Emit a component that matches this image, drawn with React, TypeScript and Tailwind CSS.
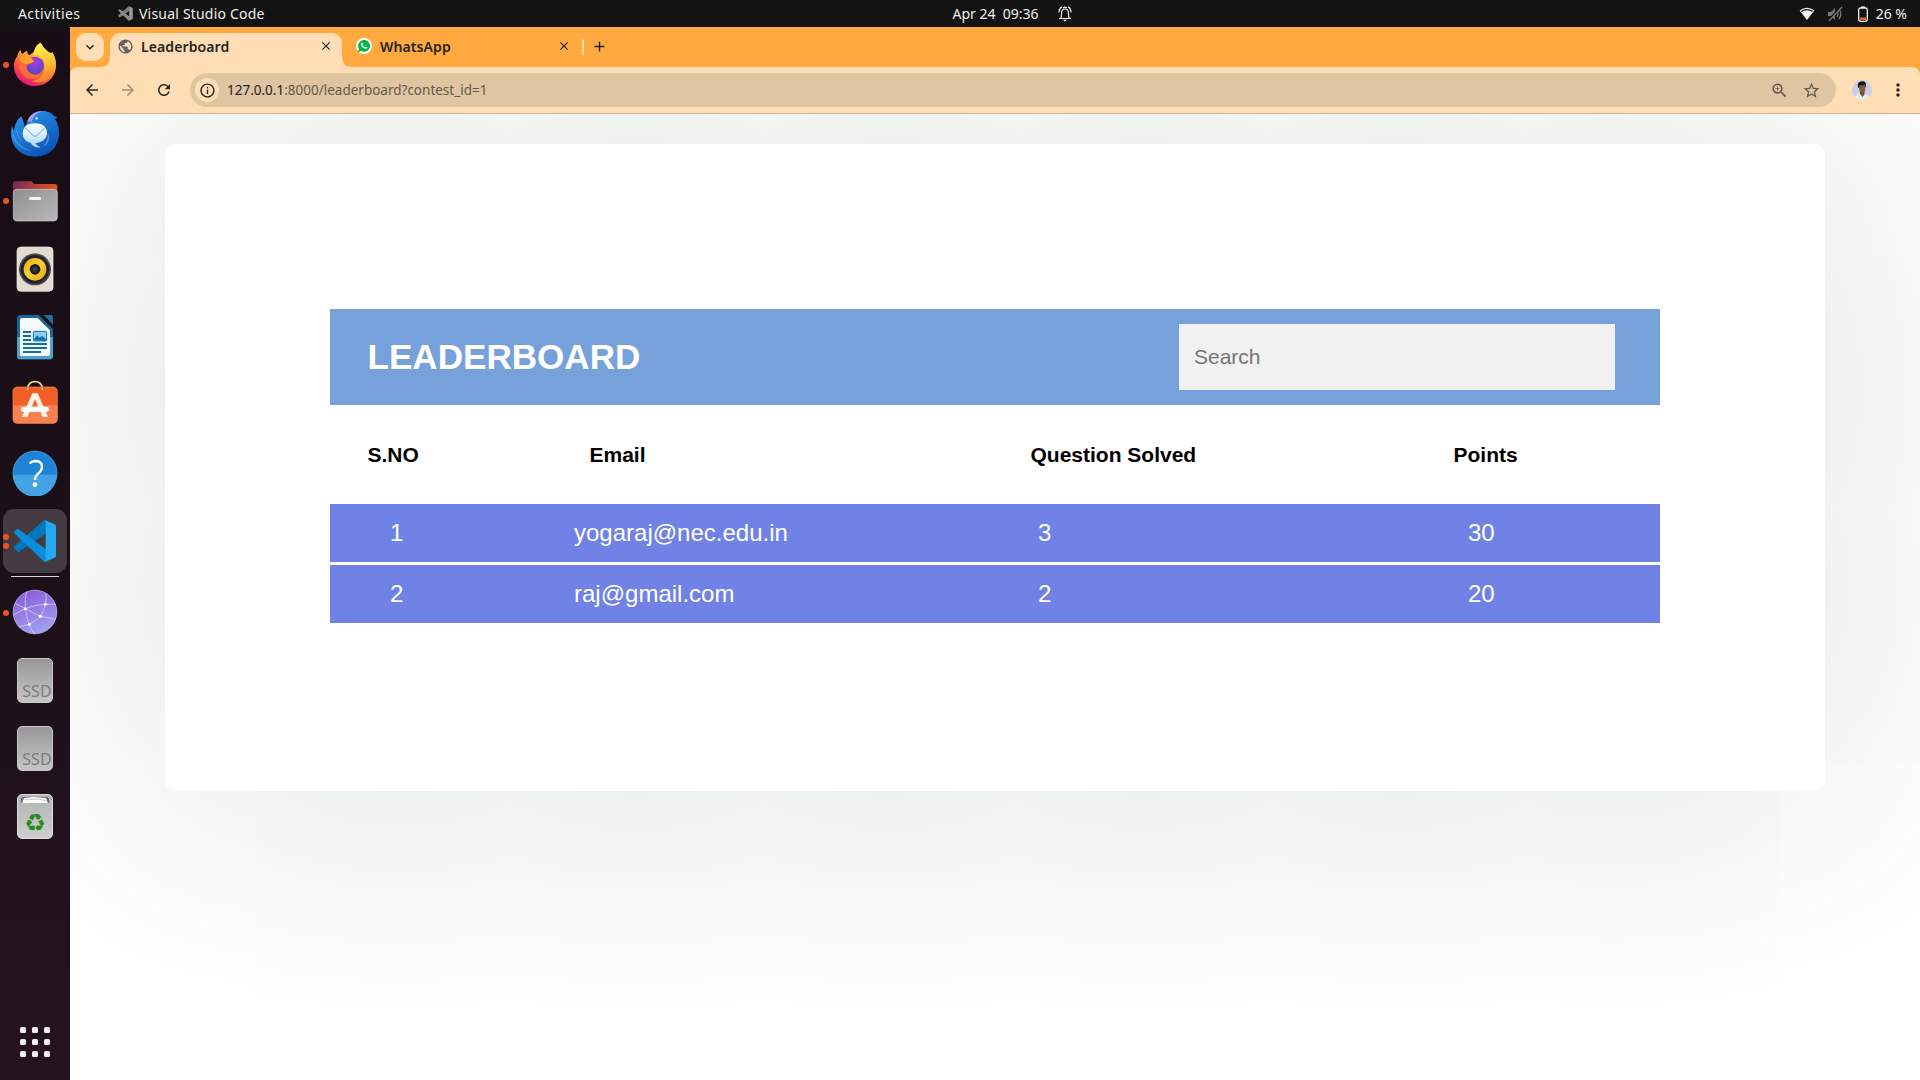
import React from "react";
import {
  MdArrowBack,
  MdArrowForward,
  MdRefresh,
  MdInfoOutline,
  MdOutlineZoomIn,
  MdStarBorder,
  MdMoreVert,
  MdClose,
  MdAdd,
  MdPublic,
  MdKeyboardArrowDown,
} from "react-icons/md";
import { IoLogoWhatsapp } from "react-icons/io";

const UI = "font-['Noto_Sans',sans-serif]";

function CodeMark({ mono }: { mono?: boolean }) {
  const a = mono ? "#7c7c7c" : "#0078bd";
  const b = mono ? "#8a8a8a" : "#0a8ddb";
  const c = mono ? "#9a9a9a" : "#24a9f2";
  return (
    <g>
      <path d="M43 746 Q40 743 43 739 L130 662 Q133 659 138 661 V700 L56 757 Q52 757 50 753 Z" fill={a} />
      <path d="M43 700 Q40 696 44 693 L51 688 Q54 686 58 689 L138 748 V785 Q133 787 130 783 Z" fill={b} />
      <path d="M134 660 L164 673 Q168 675 168 679 V767 Q168 771 164 773 L134 786 Q137 784 137 778 V668 Q137 662 134 660Z" fill={c} />
    </g>
  );
}

function Firefox() {
  return (
    <svg viewBox="33 60 144 144" className="size-12">
      <defs>
        <linearGradient id="ffBody" x1="0.8" y1="0.05" x2="0.3" y2="1">
          <stop offset="0" stopColor="#fff44f" />
          <stop offset="0.35" stopColor="#ffb02e" />
          <stop offset="0.65" stopColor="#ff5a36" />
          <stop offset="1" stopColor="#e3127a" />
        </linearGradient>
        <radialGradient id="ffCore" cx="0.5" cy="0.3" r="0.7">
          <stop offset="0" stopColor="#a33be0" />
          <stop offset="1" stopColor="#5347c9" />
        </radialGradient>
        <linearGradient id="ffFlame" x1="0.5" y1="0" x2="0.7" y2="1">
          <stop offset="0" stopColor="#fff24e" />
          <stop offset="0.5" stopColor="#ffc335" />
          <stop offset="1" stopColor="#ff7a2a" />
        </linearGradient>
      </defs>
      <path
        d="M62 89 C62 96 64 99 66 101 L70 100 C76 94 80 93 81 94 C82 99 84 104 88 106 C98 98 105 96 106 84 C108 77 116 69 122 68 C126 74 128 80 136 88 C144 96 148 98 154 100 L156 96 C162 106 168 116 168 136 C168 172 140 198 105 198 C70 198 42 172 42 137 C42 122 48 114 52 109 C52 103 56 95 62 89Z"
        fill="url(#ffBody)"
      />
      <path
        d="M122 68 C126 74 128 80 136 88 C144 96 148 98 154 100 L156 96 C170 116 172 146 152 170 C136 188 112 190 96 184 C124 178 140 156 134 128 C130 112 118 104 102 104 C98 92 110 76 122 68Z"
        fill="url(#ffFlame)"
      />
      <circle cx="105" cy="137" r="27" fill="url(#ffCore)" />
      <path
        d="M60 122 C70 116 86 116 104 124 C98 130 88 132 84 133 C78 138 78 144 84 154 C92 166 112 168 126 158 C118 176 92 184 74 170 C60 158 54 138 60 122Z"
        fill="#ff6a35"
      />
      <path d="M60 122 C62 112 66 102 70 100 C78 93 81 93 81 94 C82 102 84 106 88 108 L102 122 C96 130 84 130 76 132 C70 130 64 126 60 122Z" fill="#ffa02e" />
    </svg>
  );
}

function Thunderbird() {
  return (
    <svg viewBox="33 264 144 144" className="size-12 overflow-visible">
      <defs>
        <linearGradient id="tbBody" x1="0" y1="0" x2="0.6" y2="1">
          <stop offset="0" stopColor="#2a9bf0" />
          <stop offset="1" stopColor="#0a55b8" />
        </linearGradient>
        <linearGradient id="tbEnv" x1="0" y1="0" x2="0" y2="1">
          <stop offset="0" stopColor="#ffffff" />
          <stop offset="1" stopColor="#a9d8fb" />
        </linearGradient>
      </defs>
      <path
        d="M82 304 C88 286 104 273 126 273 C146 273 156 280 162 288 L172 292 C168 296 166 296 164 298 C172 304 177 320 177 340 C177 380 148 410 106 410 C64 410 33 382 33 340 C33 330 34 324 36 318 C38 326 40 330 42 332 C44 312 54 296 64 289 C68 300 74 310 74 322 C78 314 80 310 82 304Z"
        fill="url(#tbBody)"
      />
      <path d="M36 318 C38 350 58 384 96 392 C70 392 46 376 36 350Z" fill="#3ba6f5" opacity="0.6" />
      <path d="M82 304 C90 282 106 274 128 273 C108 280 98 290 96 306Z" fill="#a79af0" />
      <path d="M50 324 C52 344 58 356 70 366 C56 358 48 344 50 324Z" fill="#8f7fe6" />
      <path d="M128 380 C142 370 146 350 142 336 C152 352 146 374 128 380Z" fill="#6f8bea" />
      <circle cx="110" cy="295" r="3.5" fill="#e8f4ff" />
      <path d="M68 338 C70 318 86 309 106 310 C128 310 142 322 141 340 C140 358 126 368 106 370 C110 376 116 380 122 382 C108 384 96 378 92 368 C76 364 68 354 68 338Z" fill="url(#tbEnv)" />
      <path d="M74 322 L100 347 Q105 351 110 347 L136 322" fill="none" stroke="#6fa8dd" strokeWidth="3" />
    </svg>
  );
}

function Files() {
  return (
    <svg viewBox="33 468 144 144" className="size-12">
      <defs>
        <linearGradient id="fiBack" x1="0" y1="0" x2="1" y2="0">
          <stop offset="0" stopColor="#7d2a55" />
          <stop offset="1" stopColor="#e2541f" />
        </linearGradient>
        <linearGradient id="fiFront" x1="0" y1="0" x2="1" y2="1">
          <stop offset="0" stopColor="#8f8f8f" />
          <stop offset="1" stopColor="#b9b9b9" />
        </linearGradient>
      </defs>
      <path d="M39 530 V492 Q39 484 47 484 H92 Q96 484 99 488 L102 492 H164 Q172 492 172 500 V530Z" fill="url(#fiBack)" />
      <rect x="40" y="508" width="132" height="95" rx="11" fill="url(#fiFront)" stroke="#cfcfcf" strokeWidth="2" />
      <rect x="87" y="531" width="36" height="9" rx="4" fill="#f4f4f4" />
    </svg>
  );
}

function Rhythmbox() {
  return (
    <svg viewBox="33 672 144 144" className="size-12">
      <defs>
        <linearGradient id="rbCone" x1="0" y1="0" x2="1" y2="1">
          <stop offset="0" stopColor="#e8a80d" />
          <stop offset="0.5" stopColor="#f8cf37" />
          <stop offset="1" stopColor="#e3a40c" />
        </linearGradient>
      </defs>
      <rect x="51" y="681" width="108" height="133" rx="12" fill="#e2ddd0" stroke="#f6f3ea" strokeWidth="2" />
      <circle cx="105" cy="748" r="48" fill="#4d4c55" />
      <circle cx="105" cy="748" r="43" fill="#24222d" />
      <circle cx="105" cy="748" r="34" fill="url(#rbCone)" />
      <circle cx="105" cy="748" r="16" fill="#1d1d1f" />
      <circle cx="105" cy="748" r="8" fill="#3b3b3c" />
    </svg>
  );
}

function Writer() {
  return (
    <svg viewBox="33 36 144 144" className="size-12">
      <path d="M62 45 H116 L159 88 V167 Q159 178 148 178 H62 Q51 178 51 167 V56 Q51 45 62 45Z" fill="#12699c" />
      <path d="M51 111 H159 V167 Q159 178 148 178 H62 Q51 178 51 167Z" fill="#4da3cd" />
      <path d="M131 45 H154 Q159 45 159 50 V74 Z" fill="#1d6f9f" />
      <path d="M66 54 H113 L150 91 V162 Q150 168 144 168 H66 Q60 168 60 162 V60 Q60 54 66 54Z" fill="#f7fafb" />
      <path d="M69 96h24M69 108h24M69 120h24M69 132h72M69 144h72M69 156h54" stroke="#0b71ad" strokeWidth="5.5" />
      <rect x="100" y="94" width="40" height="29" rx="3" fill="#8ecbec" stroke="#0b71ad" strokeWidth="3" />
      <path d="M101 121 L111 106 L118 113 L126 108 L139 118 V122Z" fill="#0b71ad" />
    </svg>
  );
}

function Software() {
  return (
    <svg viewBox="33 240 144 144" className="size-12">
      <path d="M83 270 V264 Q86 245 105 245 Q124 245 127 264 V270" fill="none" stroke="#efcf8d" strokeWidth="5" />
      <rect x="39" y="261" width="133" height="109" rx="13" fill="#f05f26" stroke="#f9925f" strokeWidth="2" />
      <path d="M39 316 H172 V357 Q172 370 159 370 H52 Q39 370 39 357Z" fill="#f58250" />
      <path d="M83 270 V264 M127 264 V270" stroke="#efcf8d" strokeWidth="5" />
      <path d="M97 280 H113 L144 351 H128 L105 298 L82 351 H66Z" fill="#fff0e6" />
      <rect x="63" y="320" width="84" height="16" rx="8" fill="#fff" />
    </svg>
  );
}

function Help() {
  return (
    <svg viewBox="33 444 144 144" className="size-12">
      <circle cx="105" cy="519" r="66" fill="#1f83d8" stroke="#57b0ee" strokeWidth="2" />
      <path d="M39 524 H171 A66 66 0 0 1 39 524Z" fill="#44a3e4" />
      <path d="M89 490 Q96 483 107 483 Q126 484 126 501 Q126 511 115 520 Q105 528 105 540" fill="none" stroke="#fff" strokeWidth="7" />
      <circle cx="105" cy="554" r="7" fill="#fff" />
    </svg>
  );
}

function Network() {
  return (
    <svg viewBox="33 84 144 144" className="size-12">
      <defs>
        <linearGradient id="nwBg" x1="0.3" y1="0" x2="0.7" y2="1">
          <stop offset="0" stopColor="#8c5ddb" />
          <stop offset="1" stopColor="#9fa4f0" />
        </linearGradient>
        <clipPath id="nwClip">
          <circle cx="105" cy="156" r="66" />
        </clipPath>
      </defs>
      <circle cx="105" cy="156" r="66" fill="url(#nwBg)" />
      <g clipPath="url(#nwClip)" fill="none" stroke="#d9c9f6" strokeWidth="2.5">
        <path d="M80 92 Q74 118 76 146 Q79 172 88 193 Q92 208 104 222" />
        <path d="M38 126 L76 146 L121 169 L172 178" />
        <path d="M76 146 Q104 134 136 133 Q154 131 172 134" />
        <path d="M136 92 Q142 114 136 133 Q132 152 121 169 Q106 184 88 193 Q68 200 50 200" />
        <path d="M76 146 L38 166" />
      </g>
      <g fill="#fff">
        <circle cx="76" cy="146" r="4.5" />
        <circle cx="136" cy="133" r="4.5" />
        <circle cx="121" cy="169" r="4.5" />
        <circle cx="88" cy="193" r="4.5" />
      </g>
      <circle cx="105" cy="156" r="65.5" fill="none" stroke="#c3a9f2" strokeWidth="2" />
    </svg>
  );
}

function Ssd() {
  return (
    <div className="flex h-[45px] w-9 items-end justify-end rounded-[5px] border border-[#c9c9c9] bg-linear-to-b from-[#989898] to-[#c6c6c6]">
      <span className={`${UI} text-[16px] leading-[22px] tracking-[0.2px] text-[#7c7c7c]`}>SSD</span>
    </div>
  );
}

function Trash() {
  return (
    <div className="relative flex h-[45px] w-9 flex-col items-center rounded-[5px] border border-[#dedede] bg-linear-to-b from-[#b4b4b4] to-[#cdcdcd]">
      <svg viewBox="0 0 30 7" className="mt-px h-[7px] w-[30px]">
        <path d="M1 7 Q0 2 3 1 L27 1 Q30 2 29 7Z" fill="#6a6a6a" />
        <path d="M2 7 L4 2 L13 1 L26 2 L28 7Z" fill="#fff" />
        <path d="M5 4 L18 3 L27 5" stroke="#b5b5b5" strokeWidth="0.8" fill="none" />
      </svg>
      <span className="mt-[9px] font-['DejaVu_Sans',sans-serif] text-[24px] leading-[22px] text-[#278a1d]">♻</span>
    </div>
  );
}

function Slot({ dots = 0, active = false, children }: { dots?: number; active?: boolean; children: React.ReactNode }) {
  return (
    <div className="relative flex h-[68px] w-full shrink-0 items-center justify-center">
      {active && <div className="absolute top-[3px] left-[3px] size-16 rounded-[11px] bg-[#433a42]" />}
      <div className="absolute top-0 left-[3px] flex h-[70px] flex-col justify-center gap-[3px]">
        {Array.from({ length: dots }, (_, i) => (
          <span key={i} className="size-[6px] rounded-full bg-[#e95420]" />
        ))}
      </div>
      <div className="relative flex">{children}</div>
    </div>
  );
}

function Dock() {
  return (
    <aside className="flex w-[70px] shrink-0 flex-col items-center bg-linear-to-b from-[#180d14] via-[#1c1018] to-[#25131e] pt-[3px]">
      <Slot dots={1}><Firefox /></Slot>
      <Slot><Thunderbird /></Slot>
      <Slot dots={1}><Files /></Slot>
      <Slot><Rhythmbox /></Slot>
      <Slot><Writer /></Slot>
      <Slot><Software /></Slot>
      <Slot><Help /></Slot>
      <Slot dots={2} active>
        <svg viewBox="33 648 144 144" className="size-12"><CodeMark /></svg>
      </Slot>
      <div className="flex h-1 items-center"><div className="h-px w-12 bg-[#d5d2d4]" /></div>
      <Slot dots={1}><Network /></Slot>
      <Slot><Ssd /></Slot>
      <Slot><Ssd /></Slot>
      <Slot><Trash /></Slot>
      <div className="mt-auto mb-[23px] grid grid-cols-3 gap-[6px]">
        {Array.from({ length: 9 }, (_, i) => (
          <span key={i} className="size-[6px] rounded-[1.5px] bg-[#f2efef]" />
        ))}
      </div>
    </aside>
  );
}

function TopBar() {
  return (
    <header className={`${UI} grid h-[27px] shrink-0 grid-cols-[1fr_auto_1fr] items-center bg-[#131313] text-[14px] text-[#eeeeee]`}>
      <div className="flex items-center pl-[18px]">
        <span className="w-[100px] tracking-[0.4px]">Activities</span>
        <svg viewBox="40 658 130 130" className="mr-[6px] size-[15px]"><CodeMark mono /></svg>
        <span className="tracking-[0.2px]">Visual Studio Code</span>
      </div>
      <div className="flex items-center pl-[104px]">
        <span className="w-[105px] whitespace-pre">Apr 24  09:36</span>
        <svg viewBox="0 0 14 16" className="h-4 w-[14px]" fill="none" stroke="#eee" strokeWidth="1.2">
          <path d="M1 12.5 H13 M2.8 12 Q3.6 10 3.6 7 Q3.6 3 7 3 Q10.4 3 10.4 7 Q10.4 10 11.2 12" />
          <path d="M1 6.5 Q1 2.5 4 0.9 M13 6.5 Q13 2.5 10 0.9" />
          <path d="M5.3 2 Q7 0.4 8.7 2" />
          <path d="M5.3 13.8 H8.7 Q8.2 15.5 7 15.5 Q5.8 15.5 5.3 13.8Z" fill="#eee" stroke="none" />
        </svg>
      </div>
      <div className="flex items-center justify-end pr-[13px]">
        <svg viewBox="0 0 16 14" className="mr-3 h-[14px] w-4">
          <path d="M8 13 L0.6 3.6 Q8 -2.2 15.4 3.6Z" fill="#f2f2f2" />
          <path d="M2.4 4.6 Q8 0.6 13.6 4.6" stroke="#131313" strokeWidth="1.2" fill="none" />
        </svg>
        <svg viewBox="0 0 16 16" className="mr-[15px] size-[16px]" fill="none" stroke="#777" strokeWidth="1.3">
          <path d="M1 6 H4 L8 2 V14 L4 10 H1Z" fill="#777" stroke="none" />
          <path d="M10 5 Q12 8 10 11 M12 3 Q15.6 8 12 13" />
          <path d="M1 15 L14 1" stroke="#131313" strokeWidth="2.4" />
          <path d="M2 15 L15 1" />
        </svg>
        <svg viewBox="0 0 10 16" className="mr-[7px] h-4 w-[10px]">
          <rect x="0.7" y="2" width="8.6" height="13.3" rx="1.8" fill="none" stroke="#eee" strokeWidth="1.3" />
          <rect x="3" y="0.4" width="4" height="1.6" fill="#eee" />
          <rect x="2" y="11.5" width="6" height="2.5" fill="#f0642c" />
        </svg>
        <span className="w-[32px] text-right whitespace-nowrap">26 %</span>
      </div>
    </header>
  );
}

function Chrome() {
  return (
    <div className={`${UI} shrink-0 text-[#262422]`}>
      <div className="flex h-10 items-start bg-[#ffa93f] pt-[6px] pl-[6px]">
        <button className="mr-[6px] flex size-7 items-center justify-center rounded-[10px] bg-[#ffdeb6]">
          <MdKeyboardArrowDown size={16} />
        </button>
        <div className="relative flex h-[34px] w-[232px] items-center rounded-t-[10px] bg-[#ffdeb6] pb-2 pl-[7px]">
          <svg viewBox="0 0 10 10" className="absolute bottom-0 -left-[10px] size-[10px]"><path d="M10 0 V10 H0 Q10 10 10 0Z" fill="#ffdeb6" /></svg>
          <svg viewBox="0 0 10 10" className="absolute -right-[10px] bottom-0 size-[10px]"><path d="M0 0 V10 H10 Q0 10 0 0Z" fill="#ffdeb6" /></svg>
          <MdPublic size={17} className="mr-[7px] text-[#5f6368]" />
          <span className="flex-1 text-[14px] font-semibold tracking-[0.1px]">Leaderboard</span>
          <MdClose size={14} className="mr-[9px]" />
        </div>
        <div className="flex h-[26px] w-[241px] items-center pl-[14px]">
          <span className="mr-2 flex size-4 items-center justify-center rounded-full bg-white text-[#08b847]">
            <IoLogoWhatsapp size={14} />
          </span>
          <span className="flex-1 text-[14px] font-semibold tracking-[0.1px]">WhatsApp</span>
          <MdClose size={14} className="mr-[12px]" />
        </div>
        <div className="flex h-[27px] items-center">
          <div className="h-4 w-[2px] -translate-x-px rounded bg-[#ffdeb6]" />
          <MdAdd size={17} className="ml-[6px]" />
        </div>
      </div>
      <div className="bg-[#ffa93f]">
        <div className="flex h-[47px] items-center rounded-t-[8px] border-b border-[#cdb192] bg-[#ffdeb6] pr-[13px] pl-[13px]">
          <MdArrowBack size={18} className="mr-[18px]" />
          <MdArrowForward size={18} className="mr-[18px] text-[#a08c75]" />
          <MdRefresh size={18} className="mr-[17px]" />
          <div className="flex h-[34px] flex-1 items-center rounded-full bg-[#dfc5a2] pr-[15px] pl-[5px]">
            <span className="mr-[8px] flex size-6 items-center justify-center rounded-full bg-[#ffdeb6]">
              <MdInfoOutline size={17} />
            </span>
            <span className="flex-1 text-[13.5px] text-[#665a4b]">
              <span className="text-[#262422]">127.0.0.1</span>:8000/leaderboard?contest_id=1
            </span>
            <MdOutlineZoomIn size={19} className="mr-[13px] text-[#665a4b]" />
            <MdStarBorder size={19} className="text-[#665a4b]" />
          </div>
          <svg viewBox="0 0 20 20" className="mr-[16px] ml-[16px] size-5">
            <defs>
              <clipPath id="av"><circle cx="10" cy="10" r="10" /></clipPath>
            </defs>
            <g clipPath="url(#av)">
              <rect width="20" height="20" fill="#c9cee4" />
              <path d="M2 20 Q3 14 8 13.5 H13 Q17 14.5 18 20Z" fill="#e6eeea" />
              <path d="M8 11 H12.5 V14.5 L10.5 17 L8 14Z" fill="#7a4a35" />
              <ellipse cx="10.2" cy="8.2" rx="3.1" ry="4.4" fill="#8a563f" />
              <path d="M6 7.5 Q5 1.5 9 1.5 Q14.5 0.5 14 6 L13.3 8 L12.8 5.2 H7.6 L7.2 8Z" fill="#17130f" />
            </g>
          </svg>
          <MdMoreVert size={20} className="-mr-px" />
        </div>
      </div>
    </div>
  );
}

const rows = [
  { n: 1, email: "yogaraj@nec.edu.in", solved: 3, points: 30 },
  { n: 2, email: "raj@gmail.com", solved: 2, points: 20 },
];

function Page() {
  return (
    <main className="flex-1 overflow-hidden bg-white px-[95px] pt-[30px] font-['Liberation_Sans',Arial,sans-serif]">
      <section className="h-[647px] rounded-[12px] bg-white px-[165px] pt-[165px] shadow-[0_0_300px_rgba(0,67,25,0.2)]">
        <div className="flex h-24 items-center justify-between bg-[#77a1db] pr-[45px] pl-[37.5px]">
          <h1 className="text-[35.1px] font-bold text-white">LEADERBOARD</h1>
          <input
            placeholder="Search"
            className="h-[66px] w-[436px] bg-[#f1f1f1] px-[15px] text-[21px] outline-none placeholder:text-[#757575]"
          />
        </div>
        <div className="grid h-[99px] grid-cols-[222px_441px_423px_1fr] items-center pl-[37.5px] text-[21px] font-bold text-black">
          <span>S.NO</span>
          <span>Email</span>
          <span>Question Solved</span>
          <span>Points</span>
        </div>
        <div className="flex flex-col gap-[3px]">
          {rows.map((r) => (
            <div
              key={r.n}
              className="grid h-[58px] grid-cols-[184px_464px_430px_1fr] items-center bg-[#7182e6] pl-[60px] text-[24px] text-white"
            >
              <span>{r.n}</span>
              <span>{r.email}</span>
              <span>{r.solved}</span>
              <span>{r.points}</span>
            </div>
          ))}
        </div>
      </section>
    </main>
  );
}

export default function App() {
  return (
    <div className="flex h-[1080px] w-[1920px] flex-col overflow-hidden">
      <TopBar />
      <div className="flex min-h-0 flex-1">
        <Dock />
        <div className="flex min-w-0 flex-1 flex-col">
          <Chrome />
          <Page />
        </div>
      </div>
    </div>
  );
}
